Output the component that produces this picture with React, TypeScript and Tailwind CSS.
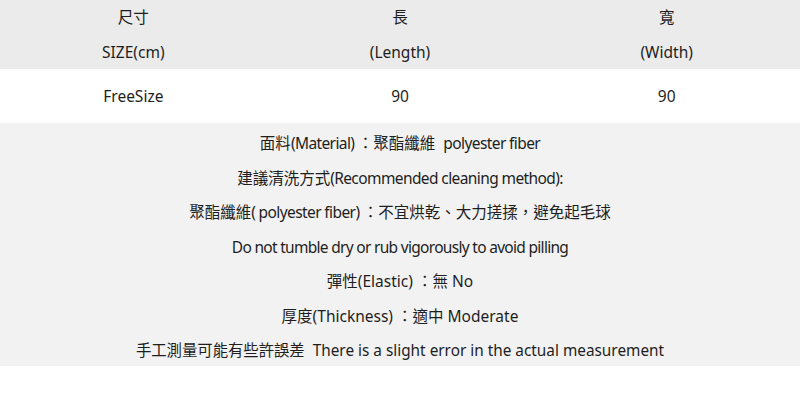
import React from "react";

const font = { fontFamily: '"Noto Sans", "Noto Sans CJK TC", sans-serif' };

function L({ children }: { children: React.ReactNode }) {
  return <span className="tracking-[-0.6px]">{children}</span>;
}

export default function App() {
  return (
    <div className="w-[800px] h-[402px] bg-white text-[#1e1e1e] text-[15.5px]" style={font}>
      <div className="bg-[#ebebeb] h-[69px] grid grid-cols-3 text-center leading-[35px]">
        <div className="flex flex-col"><span>尺寸</span><span>SIZE(cm)</span></div>
        <div className="flex flex-col"><span>長</span><span>(Length)</span></div>
        <div className="flex flex-col"><span>寬</span><span>(Width)</span></div>
      </div>
      <div className="h-[54px] grid grid-cols-3 text-center items-center pt-[2px]">
        <div>FreeSize</div>
        <div>90</div>
        <div>90</div>
      </div>
      <div className="bg-[#f2f2f2] h-[243px] flex flex-col items-center pt-[3px] leading-[34.5px] whitespace-pre">
        <div>面料<L>(Material) </L>：聚酯纖維  <L>polyester fiber</L></div>
        <div>建議清洗方式<L>(Recommended cleaning method):</L></div>
        <div>聚酯纖維<L>( polyester fiber) </L>：不宜烘乾、大力搓揉，避免起毛球</div>
        <div className="tracking-[-0.7px]">Do not tumble dry or rub vigorously to avoid pilling</div>
        <div>彈性(Elastic) ：無 No</div>
        <div>厚度(Thickness) ：適中 Moderate</div>
        <div className="text-[15.35px]">手工測量可能有些許誤差  There is a slight error in the actual measurement</div>
      </div>
    </div>
  );
}
